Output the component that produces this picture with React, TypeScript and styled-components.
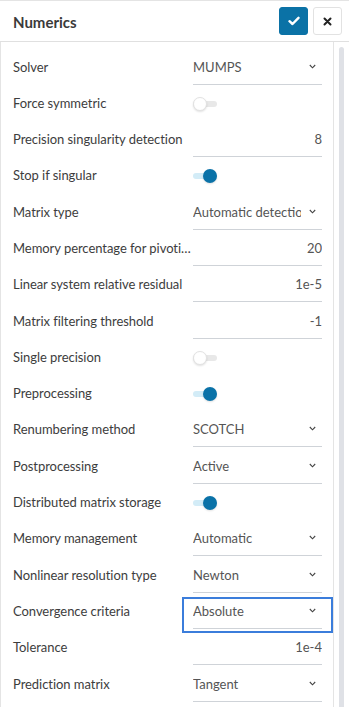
import styled, { createGlobalStyle } from 'styled-components';

const GlobalStyle = createGlobalStyle`
    html, body {
        margin: 0;
        padding: 0;
        background: #ffffff;
        font-family: Lato, "Open Sans", sans-serif;
    }
`

const Window = styled.div`
    width: 349px;
    height: 707px;
    overflow: hidden;
    background: #fff;
`

const Header = styled.div`
    display: flex;
    align-items: center;
    justify-content: space-between;
    padding: 0 7px 0 13px;
    border-top: 1px solid #e4e4e4;
    border-bottom: 1px solid #e0e0e0;
    box-sizing: border-box;
    height: 42px;
`

const Title = styled.div`
    font-size: 15px;
    font-weight: 700;
    color: #3a3a3a;
    margin-top: 1px;
`

const Actions = styled.div`
    display: flex;
    gap: 5px;
`

const IconButton = styled.button<{ primary?: boolean }>`
    width: 29px;
    height: 28px;
    border-radius: 3px;
    padding: 0;
    display: flex;
    align-items: center;
    justify-content: center;
    background: ${({ primary }) => primary ? '#0b72a6' : '#ffffff'};
    border: 1px solid ${({ primary }) => primary ? '#0b72a6' : '#e2e2e2'};
`

const Body = styled.div`
    display: flex;
    height: 665px;
`

const Panel = styled.div`
    width: 334px;
    box-sizing: border-box;
    border-left: 1px solid #e4e4e4;
    border-right: 1px solid #e4e4e4;
    padding-top: 10.5px;
`

const Gutter = styled.div`
    flex: 1;
    display: flex;
    justify-content: center;
    padding-top: 5px;
`

const Thumb = styled.div`
    width: 5px;
    height: 100%;
    border-radius: 3px 3px 0 0;
    background: #dfe1e6;
`

const Row = styled.div`
    display: grid;
    grid-template-columns: 191px minmax(0, 1fr);
    height: 36.3px;
`

const Label = styled.div`
    padding: 6px 0 0 12px;
    font-size: 13px;
    line-height: 17px;
    letter-spacing: -0.05px;
    color: #3d3d3d;
    white-space: nowrap;
    overflow: hidden;
    text-overflow: ellipsis;
`

const Cell = styled.div<{ focused?: boolean }>`
    margin-left: -10px;
    min-width: 0;
    padding: 0 11px;
    height: 36px;
    box-sizing: border-box;
    box-shadow: ${({ focused }) => focused ? 'inset 0 0 0 2px #3b7ddb' : 'none'};
`

const Field = styled.div<{ align?: string }>`
    height: 32px;
    box-sizing: border-box;
    padding-top: 6px;
    line-height: 17px;
    font-size: 13px;
    color: #555;
    border-bottom: 1px solid #cfd3d8;
    display: flex;
    justify-content: ${({ align }) => align === 'right' ? 'flex-end' : 'space-between'};
    white-space: nowrap;
    overflow: hidden;
`

const SelectText = styled.span`
    overflow: hidden;
    min-width: 0;
    flex: 1 1 0;
`

const Chevron = styled.svg`
    flex: none;
    margin: 5px 6px 0 8px;
`

const ToggleWrap = styled.div`
    padding-top: 7px;
`

const Track = styled.div<{ on?: boolean }>`
    position: relative;
    width: 24px;
    height: 6px;
    margin-top: 5px;
    border-radius: 3px;
    background: ${({ on }) => on ? '#d3ecf7' : '#e8e8e8'};
`

const Knob = styled.div<{ on?: boolean }>`
    position: absolute;
    top: -4px;
    left: ${({ on }) => on ? '10px' : '0px'};
    width: 14px;
    height: 14px;
    border-radius: 50%;
    box-sizing: border-box;
    background: ${({ on }) => on ? '#0a72a8' : '#ffffff'};
    border: ${({ on }) => on ? 'none' : '1px solid #e2e2e2'};
    box-shadow: 0 1px 2px rgba(0, 0, 0, 0.12);
`

type Item =
    | { label: string; kind: 'select'; value: string; focused?: boolean }
    | { label: string; kind: 'number'; value: string }
    | { label: string; kind: 'toggle'; on: boolean }

const items: Item[] = [
    { label: 'Solver', kind: 'select', value: 'MUMPS' },
    { label: 'Force symmetric', kind: 'toggle', on: false },
    { label: 'Precision singularity detection', kind: 'number', value: '8' },
    { label: 'Stop if singular', kind: 'toggle', on: true },
    { label: 'Matrix type', kind: 'select', value: 'Automatic detection' },
    { label: 'Memory percentage for pivoting', kind: 'number', value: '20' },
    { label: 'Linear system relative residual', kind: 'number', value: '1e-5' },
    { label: 'Matrix filtering threshold', kind: 'number', value: '-1' },
    { label: 'Single precision', kind: 'toggle', on: false },
    { label: 'Preprocessing', kind: 'toggle', on: true },
    { label: 'Renumbering method', kind: 'select', value: 'SCOTCH' },
    { label: 'Postprocessing', kind: 'select', value: 'Active' },
    { label: 'Distributed matrix storage', kind: 'toggle', on: true },
    { label: 'Memory management', kind: 'select', value: 'Automatic' },
    { label: 'Nonlinear resolution type', kind: 'select', value: 'Newton' },
    { label: 'Convergence criteria', kind: 'select', value: 'Absolute', focused: true },
    { label: 'Tolerance', kind: 'number', value: '1e-4' },
    { label: 'Prediction matrix', kind: 'select', value: 'Tangent' },
]

const ChevronIcon = () => (
    <Chevron width="7" height="5" viewBox="0 0 7 5">
        <path d="M0.8 1 L3.5 3.8 L6.2 1" fill="none" stroke="#444" strokeWidth="1.1" />
    </Chevron>
)

const Control = ({ item }: { item: Item }) => {
    if (item.kind === 'toggle') {
        return (
            <ToggleWrap>
                <Track on={item.on}><Knob on={item.on} /></Track>
            </ToggleWrap>
        )
    }
    if (item.kind === 'number') {
        return <Field align="right">{item.value}</Field>
    }
    return (
        <Field>
            <SelectText>{item.value}</SelectText>
            <ChevronIcon />
        </Field>
    )
}

const App = () => {
    return (
        <Window>
            <GlobalStyle />
            <Header>
                <Title>Numerics</Title>
                <Actions>
                    <IconButton primary>
                        <svg width="12" height="10" viewBox="0 0 12 10">
                            <path d="M1.5 5.2 L4.5 8 L10.5 1.8" fill="none" stroke="#fff" strokeWidth="2.4" strokeLinecap="round" strokeLinejoin="round" />
                        </svg>
                    </IconButton>
                    <IconButton>
                        <svg width="9" height="9" viewBox="0 0 9 9">
                            <path d="M1.5 1.5 L7.5 7.5 M7.5 1.5 L1.5 7.5" fill="none" stroke="#222" strokeWidth="2" strokeLinecap="round" />
                        </svg>
                    </IconButton>
                </Actions>
            </Header>
            <Body>
                <Panel>
                    {items.map((item) => (
                        <Row key={item.label}>
                            <Label>{item.label}</Label>
                            <Cell focused={item.kind === 'select' && item.focused}>
                                <Control item={item} />
                            </Cell>
                        </Row>
                    ))}
                </Panel>
                <Gutter><Thumb /></Gutter>
            </Body>
        </Window>
    )
}

export default App
